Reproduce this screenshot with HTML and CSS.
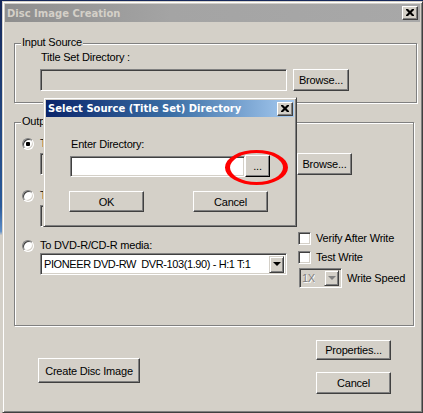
FILE: index.html
```html
<!DOCTYPE html>
<html lang="en">
<head>
    <meta charset="UTF-8">
    <title>Disc Image Creation</title>
    <link rel="stylesheet" href="styles.css">
</head>
<body>
    <div class="window main">
        <div class="titlebar inactive">
            <span class="title">Disc Image Creation</span>
            <span class="close"><svg width="8" height="7" viewBox="0 0 8 7"><path d="M0 0h2l2 2 2-2h2v1l-2.5 2.5L8 6v1H6L4 5 2 7H0V6l2.5-2.5L0 1z" fill="#000"/></svg></span>
        </div>
        <div class="client">
            <div class="group input-group">
                <span class="legend">Input Source</span>
                <div class="lbl">Title Set Directory :</div>
                <div class="row">
                    <div class="field gray wide"></div>
                    <button class="btn browse">Browse...</button>
                </div>
            </div>

            <div class="group output-group">
                <span class="legend">Output Destination</span>
                <div class="opt first"><span class="radio checked"></span>To File</div>
                <div class="row indent tight">
                    <div class="field gray wide"></div>
                    <button class="btn browse browse-out">Browse...</button>
                </div>
                <div class="opt"><span class="radio"></span>To Dir</div>
                <div class="row indent tight">
                    <div class="field gray wide short"></div>
                </div>
                <div class="media">
                    <div class="media-left">
                        <div class="opt media-opt"><span class="radio"></span>To DVD-R/CD-R media:</div>
                        <div class="combo">
                            <span class="combo-text">PIONEER DVD-RW&nbsp; DVR-103(1.90) - H:1 T:1</span>
                            <span class="arrow-btn"><span class="arrow"></span></span>
                        </div>
                    </div>
                    <div class="media-right">
                        <div class="check-row"><span class="check"></span>Verify After Write</div>
                        <div class="check-row test"><span class="check"></span>Test Write</div>
                        <div class="speed-row">
                            <div class="combo speed">
                                <span class="combo-text disabled">1X</span>
                                <span class="arrow-btn"><span class="arrow gray"></span></span>
                            </div>
                            Write Speed
                        </div>
                    </div>
                </div>
            </div>

            <div class="actions">
                <button class="btn create">Create Disc Image</button>
                <div class="stack">
                    <button class="btn props">Properties...</button>
                    <button class="btn cancel-main">Cancel</button>
                </div>
            </div>
        </div>
    </div>

    <div class="window dialog">
        <div class="titlebar active">
            <span class="title">Select Source (Title Set) Directory</span>
            <span class="close"><svg width="8" height="7" viewBox="0 0 8 7"><path d="M0 0h2l2 2 2-2h2v1l-2.5 2.5L8 6v1H6L4 5 2 7H0V6l2.5-2.5L0 1z" fill="#000"/></svg></span>
        </div>
        <div class="dlg-client">
            <div class="lbl">Enter Directory:</div>
            <div class="row dir-row">
                <div class="field white dir-field"></div>
                <button class="btn dots">...</button>
            </div>
            <div class="row dlg-buttons">
                <button class="btn ok">OK</button>
                <button class="btn dlg-cancel">Cancel</button>
            </div>
        </div>
    </div>

    <!-- annotation round the "..." button -->
    <div class="mark"></div>
</body>
</html>
```

FILE: styles.css
```css
body {
    margin: 0;
    width: 423px;
    height: 413px;
    overflow: hidden;
    position: relative;
    font-family: "Liberation Sans", Arial, sans-serif;
    font-size: 11px;
    letter-spacing: -0.2px;
    color: #000;
    background: linear-gradient(#16285a, #2a5a9a 50%, #5f8fc8 56%, #d4d0c8 57%);
}

.window {
    position: absolute;
    box-sizing: border-box;
    background-color: #d4d0c8;
    border: 1px solid;
    border-color: #d4d0c8 #404040 #404040 #d4d0c8;
    box-shadow: inset 1px 1px #fff, inset -1px -1px #808080;
    padding: 2px;
}
.main {
    left: 2px;
    top: 1px;
    width: 421px;
    height: 412px;
}
.dialog {
    left: 43px;
    top: 97px;
    width: 254px;
    height: 130px;
    z-index: 2;
}

.titlebar {
    height: 18px;
    display: flex;
    align-items: center;
    justify-content: space-between;
    padding: 0 2px;
}
.titlebar.inactive {
    background: linear-gradient(to right, #8e8e8e, #a4a4a4 40%, #a8a8a8);
}
.titlebar.active {
    height: 17px;
    padding-right: 1px;
    background: linear-gradient(to right, #0a246a, #3a6ea5 50%, #a6caf0);
}
.title {
    font-family: "DejaVu Sans", Verdana, sans-serif;
    font-weight: bold;
    font-size: 10px;
    letter-spacing: 0;
    white-space: nowrap;
}
.inactive .title {
    color: #d4d0c8;
}
.active .title {
    color: #fff;
}
.close {
    width: 16px;
    height: 14px;
    box-sizing: border-box;
    background-color: #d4d0c8;
    border: 1px solid;
    border-color: #fff #404040 #404040 #fff;
    box-shadow: inset -1px -1px #808080;
    display: flex;
    align-items: center;
    justify-content: center;
    padding: 0 1px 1px 0;
}

/* sunken fields */
.field {
    box-sizing: border-box;
    height: 22px;
    border: 1px solid;
    border-color: #808080 #fff #fff #808080;
    box-shadow: inset 1px 1px #404040, inset -1px -1px #d4d0c8;
}
.field.gray {
    background-color: #d4d0c8;
}
.field.white {
    background-color: #fff;
}
.field.wide {
    width: 247px;
}

/* raised buttons */
.btn {
    box-sizing: border-box;
    background-color: #d4d0c8;
    border: 1px solid;
    border-color: #fff #404040 #404040 #fff;
    box-shadow: inset -1px -1px #808080;
    font-family: "Liberation Sans", Arial, sans-serif;
    font-size: 11px;
    letter-spacing: -0.2px;
    color: #000;
    padding: 0;
    margin: 0;
}

.client {
    padding-left: 9px;
}

.group {
    position: relative;
    box-sizing: border-box;
    border: 1px solid #808080;
    box-shadow: inset 1px 1px #fff, 1px 1px #fff;
}
.legend {
    position: absolute;
    top: -8px;
    left: 6px;
    padding: 0 1px;
    line-height: 13px;
    background-color: #d4d0c8;
}
.lbl {
    line-height: 13px;
    padding-left: 1px;
}
.row {
    display: flex;
    align-items: center;
}

.input-group {
    margin-top: 21px;
    width: 403px;
    padding: 7px 0 11px 25px;
}
.input-group .row {
    margin-top: 5px;
    gap: 6px;
}
.browse {
    width: 56px;
    height: 22px;
}

.output-group {
    margin-top: 19px;
    width: 400px;
    height: 204px;
    padding-left: 7px;
}
.opt {
    display: flex;
    align-items: center;
    gap: 6px;
    line-height: 13px;
    margin-top: 14px;
}
.opt.first {
    margin-top: 14px;
}
.indent {
    margin-left: 18px;
}
.tight {
    margin-top: 3px;
    gap: 10px;
}
.browse-out {
    width: 55px;
}

.radio {
    position: relative;
    width: 12px;
    height: 12px;
    box-sizing: border-box;
    border-radius: 50%;
    background-color: #fff;
    border: 1px solid;
    border-color: #808080 #fff #fff #808080;
    box-shadow: inset 1px 1px #404040, inset -1px -1px #d4d0c8;
    flex: none;
}
.radio.checked::after {
    content: "";
    position: absolute;
    left: 3px;
    top: 3px;
    width: 4px;
    height: 4px;
    border-radius: 1px;
    background-color: #000;
}

.media {
    display: grid;
    grid-template-columns: 265px auto;
    column-gap: 11px;
    margin-top: 5px;
}
.media-opt {
    margin-top: 7px;
}
.combo {
    box-sizing: border-box;
    width: 247px;
    height: 22px;
    margin: 1px 0 0 18px;
    background-color: #fff;
    border: 1px solid;
    border-color: #808080 #fff #fff #808080;
    box-shadow: inset 1px 1px #404040, inset -1px -1px #d4d0c8;
    display: flex;
    align-items: center;
    justify-content: space-between;
    padding: 2px 2px 2px 3px;
}
.combo-text {
    white-space: nowrap;
    overflow: hidden;
    font-size: 11px;
    letter-spacing: -0.4px;
}
.arrow-btn {
    box-sizing: border-box;
    width: 15px;
    height: 17px;
    flex: none;
    background-color: #d4d0c8;
    border: 1px solid;
    border-color: #d4d0c8 #404040 #404040 #d4d0c8;
    box-shadow: inset 1px 1px #fff, inset -1px -1px #808080;
    display: flex;
    align-items: center;
    justify-content: center;
}
.arrow {
    width: 0;
    height: 0;
    border-left: 4px solid transparent;
    border-right: 4px solid transparent;
    border-top: 4px solid #000;
}
.arrow.gray {
    border-top-color: #808080;
}

.check-row {
    display: flex;
    align-items: center;
    gap: 5px;
    line-height: 13px;
}
.check-row.test {
    margin-top: 6px;
}
.check {
    width: 13px;
    height: 13px;
    box-sizing: border-box;
    background-color: #fff;
    border: 1px solid;
    border-color: #808080 #fff #fff #808080;
    box-shadow: inset 1px 1px #404040, inset -1px -1px #d4d0c8;
}
.speed-row {
    display: flex;
    align-items: center;
    gap: 5px;
    margin: 4px 0 0 1px;
}
.combo.speed {
    width: 43px;
    height: 20px;
    margin: 0;
    background-color: #d4d0c8;
    padding: 2px 2px 2px 2px;
}
.speed .arrow-btn {
    height: 16px;
}
.disabled {
    color: #808080;
    text-shadow: 1px 1px #fff;
}

.actions {
    display: flex;
    align-items: flex-start;
    margin-top: 14px;
}
.create {
    width: 102px;
    height: 25px;
    margin: 18px 0 0 24px;
}
.stack {
    margin-left: auto;
    margin-right: 29px;
    display: flex;
    flex-direction: column;
}
.props {
    width: 75px;
    height: 20px;
}
.cancel-main {
    width: 75px;
    height: 22px;
    margin-top: 12px;
}

.dlg-client {
    padding-left: 24px;
}
.dlg-client .lbl {
    margin-top: 21px;
}
.dir-row {
    margin-top: 4px;
    align-items: flex-start;
}
.dir-field {
    width: 175px;
    height: 21px;
    margin-top: 1px;
}
.dots {
    width: 25px;
    height: 22px;
    border-color: #fff #000 #000 #fff;
    box-shadow: inset -1px -1px #808080;
}
.dlg-buttons {
    margin-top: 14px;
    gap: 49px;
}
.ok,
.dlg-cancel {
    width: 75px;
    height: 21px;
}
.ok {
    margin-left: -1px;
}

.mark {
    position: absolute;
    left: 225px;
    top: 150px;
    width: 63px;
    height: 35px;
    box-sizing: border-box;
    border: 4px solid #f00;
    border-top-width: 3px;
    border-bottom-width: 3px;
    border-left-width: 5px;
    border-right-width: 5px;
    border-radius: 50%;
    z-index: 3;
}
```
